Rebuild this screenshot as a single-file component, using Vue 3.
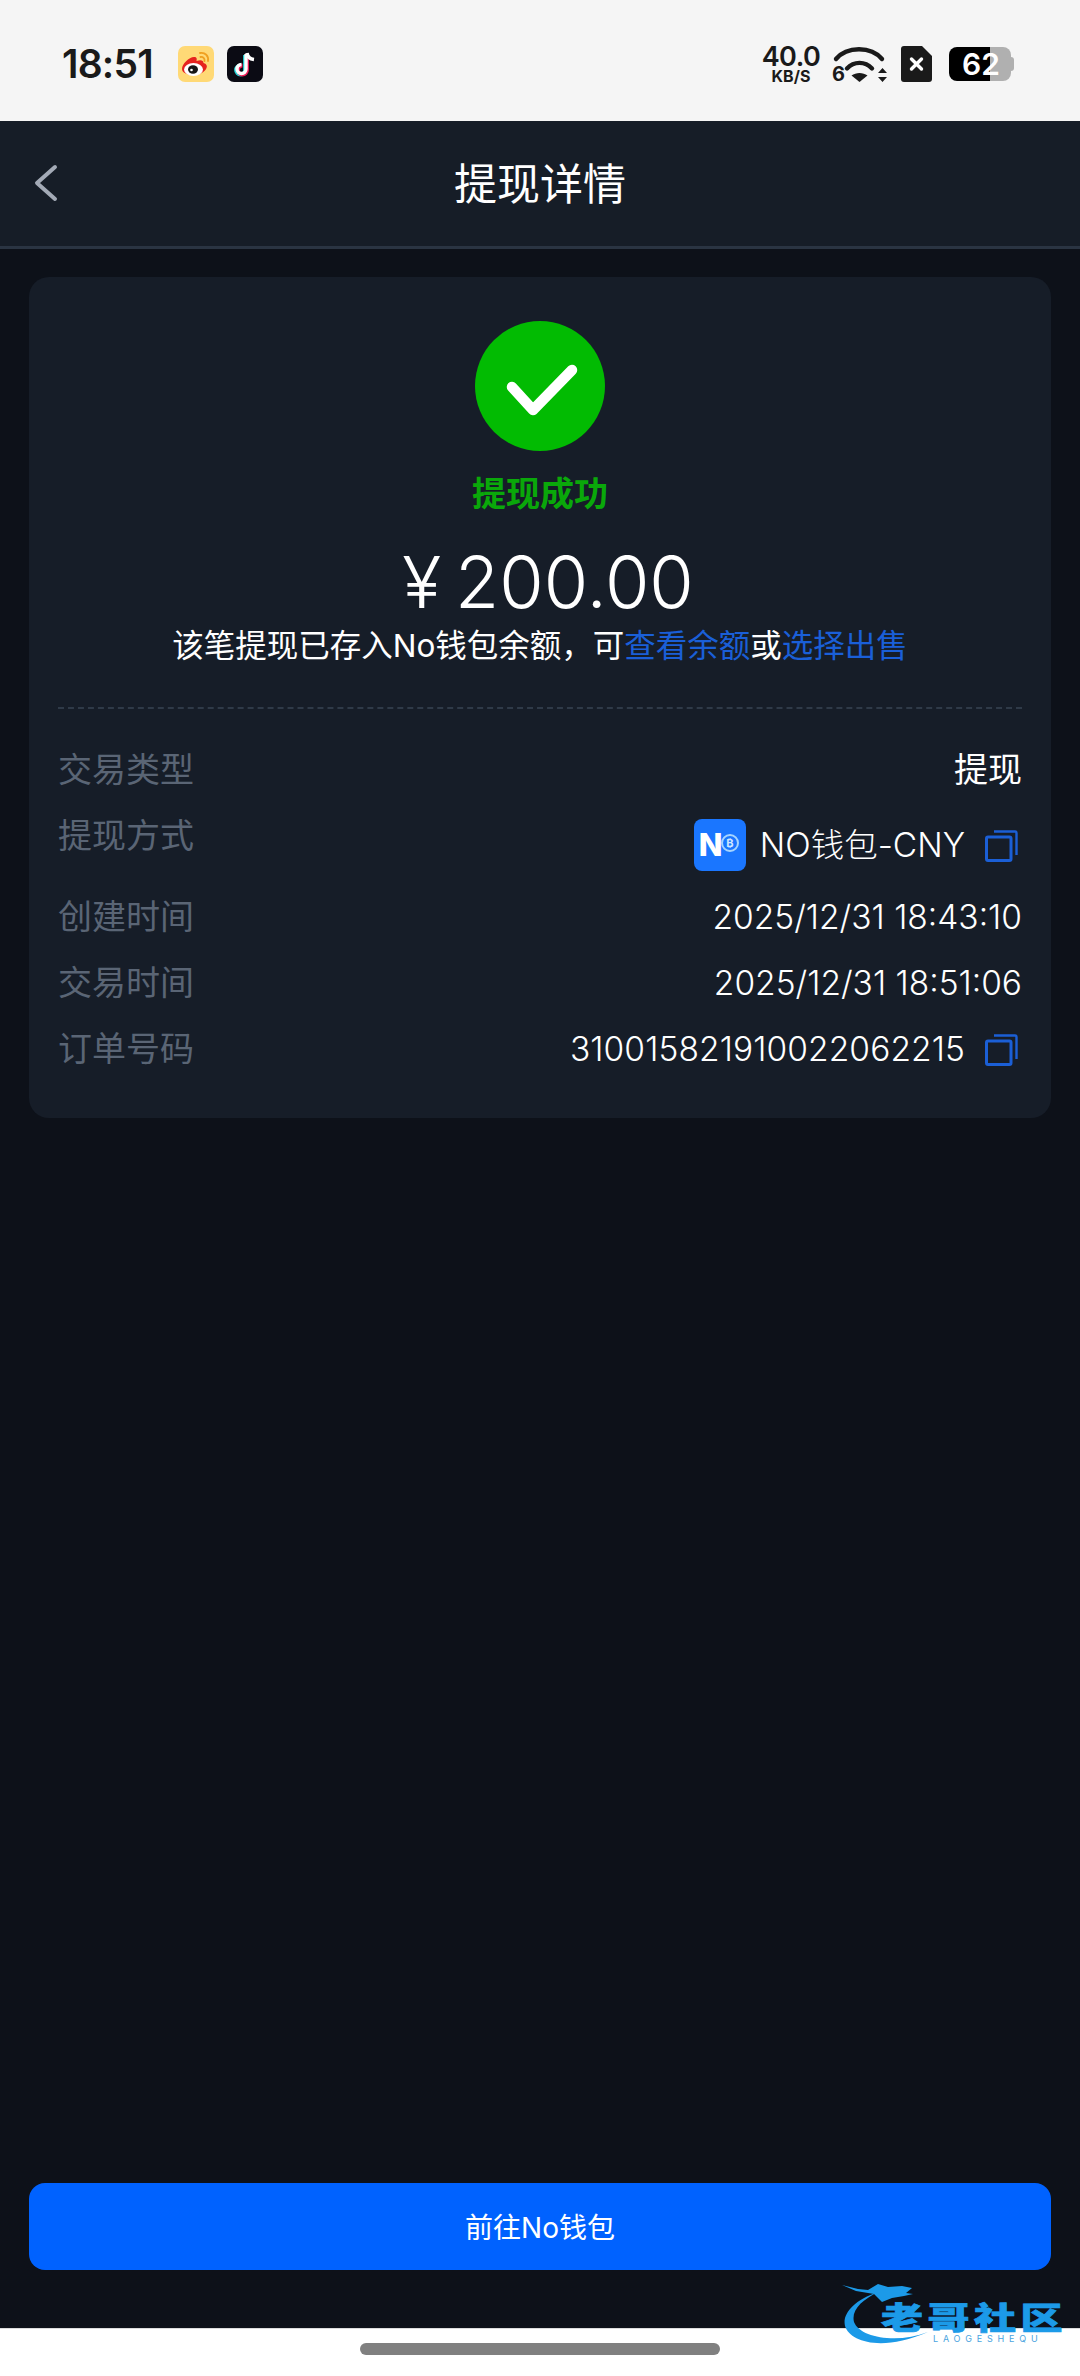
<script setup>
const rows = [
  { label: '创建时间', value: '2025/12/31 18:43:10' },
  { label: '交易时间', value: '2025/12/31 18:51:06' },
]
</script>

<template>
  <div class="screen">
    <div class="status">
      <span class="time">18:51</span>
      <svg class="app-icon weibo" viewBox="0 0 36 36">
        <rect width="36" height="36" rx="7" fill="#ffd976" />
        <path d="M4 23c0-5 7-12 12-12 3 0 3 2 2.500 4 4-1.500 7-1 7 2 3 .6 4 3 3 5-1.500 4-7 7-13 7-6.500 0-11.500-2.500-11.500-6z" fill="#e6231e" />
        <ellipse cx="15.500" cy="23.500" rx="9.500" ry="6.500" fill="#fff" />
        <ellipse cx="15" cy="23.500" rx="5" ry="4.200" fill="#161616" />
        <circle cx="13.500" cy="24" r="1.300" fill="#fff" />
        <path d="M22 7c5-1 9 3 8 8M22.500 11c2.500-.5 4.500 1.500 4 4" fill="none" stroke="#f0a020" stroke-width="1.800" stroke-linecap="round" />
      </svg>
      <svg class="app-icon tiktok" viewBox="0 0 36 36">
        <rect width="36" height="36" rx="7" fill="#0b0b14" />
        <path d="M19 8v15a4.500 4.500 0 1 1-4.500-4.500" fill="none" stroke="#25d8dc" stroke-width="3.800" transform="translate(-1 1)" />
        <path d="M19 8v15a4.500 4.500 0 1 1-4.500-4.500" fill="none" stroke="#f0205a" stroke-width="3.800" transform="translate(1 1)" />
        <path d="M19 8v15a4.500 4.500 0 1 1-4.500-4.500" fill="none" stroke="#fff" stroke-width="3.400" />
        <path d="M20 7c.5 3.500 3 6 7 6.500" fill="none" stroke="#fff" stroke-width="3.600" />
      </svg>
      <div class="status-right">
        <div class="speed">
          <span class="speed-num">40.0</span>
          <span class="speed-unit">KB/S</span>
        </div>
        <div class="wifi">
          <svg viewBox="0 0 55 36" class="wifi-svg">
            <path d="M4 13C15 0 39 0 50 13" fill="none" stroke="#1a1a1a" stroke-width="4.400" stroke-linecap="round" />
            <path d="M15 22.500C22 15 33 15 40 22.500" fill="none" stroke="#1a1a1a" stroke-width="4.400" stroke-linecap="round" />
            <path d="M27.500 36l-8-6.500c4.500-3.500 11.500-3.500 16 0z" fill="#1a1a1a" />
            <path d="M50.500 22l4.500 5h-9zM50.500 36l4.500-5h-9z" fill="#1a1a1a" />
          </svg>
          <span class="wifi-six">6</span>
        </div>
        <svg class="sim" viewBox="0 0 31 36">
          <path d="M3 0h18l10 10v23a3 3 0 0 1-3 3H3a3 3 0 0 1-3-3V3a3 3 0 0 1 3-3z" fill="#1a1a1a" />
          <path d="M10.500 13l10 10M20.500 13l-10 10" stroke="#fff" stroke-width="3.400" stroke-linecap="round" />
        </svg>
        <div class="battery">
          <div class="battery-fill"></div>
          <div class="battery-rest"></div>
          <div class="battery-nub"></div>
          <span class="battery-text">62</span>
        </div>
      </div>
    </div>

    <div class="nav">
      <svg class="back" viewBox="0 0 24 38">
        <path d="M21 3L3 19l18 16" fill="none" stroke="#a3aab6" stroke-width="4" stroke-linecap="round" stroke-linejoin="round" />
      </svg>
      <span class="nav-title">提现详情</span>
    </div>

    <main class="body">
      <section class="card">
        <div class="hero">
          <svg class="ok" viewBox="0 0 130 130">
            <circle cx="65" cy="65" r="65" fill="#02bb02" />
            <path d="M37 66l21 23 39-40" fill="none" stroke="#fff" stroke-width="10.500" stroke-linecap="round" stroke-linejoin="round" />
          </svg>
          <div class="ok-title">提现成功</div>
          <div class="amount"><span class="yen">¥</span><span>200.00</span></div>
          <div class="note">该笔提现已存入No钱包余额&#xFF0C;可<span class="link">查看余额</span>或<span class="link">选择出售</span></div>
        </div>

        <div class="details">
          <div class="row">
            <span class="label">交易类型</span>
            <span class="value value-cn">提现</span>
          </div>
          <div class="row row-method">
            <span class="label">提现方式</span>
            <span class="value method">
              <span class="no-logo">
                <span class="no-n">N</span>
                <span class="no-coin">₿</span>
              </span>
              <span>NO钱包-CNY</span>
              <svg class="copy" viewBox="0 0 33 33">
                <rect x="1.500" y="8" width="24.500" height="23.500" rx="1.500" fill="none" stroke="#1b5fd6" stroke-width="3" />
                <path d="M9 2.500h21a1.500 1.500 0 0 1 1.500 1.500v22" fill="none" stroke="#1b5fd6" stroke-width="2.400" />
              </svg>
            </span>
          </div>
          <div v-for="r in rows" :key="r.label" class="row">
            <span class="label">{{ r.label }}</span>
            <span class="value">{{ r.value }}</span>
          </div>
          <div class="row">
            <span class="label">订单号码</span>
            <span class="value method">
              <span class="order-no">310015821910022062215</span>
              <svg class="copy" viewBox="0 0 33 33">
                <rect x="1.500" y="8" width="24.500" height="23.500" rx="1.500" fill="none" stroke="#1b5fd6" stroke-width="3" />
                <path d="M9 2.500h21a1.500 1.500 0 0 1 1.500 1.500v22" fill="none" stroke="#1b5fd6" stroke-width="2.400" />
              </svg>
            </span>
          </div>
        </div>
      </section>

      <button class="cta">前往No钱包</button>
    </main>

    <footer class="home">
      <div class="home-bar"></div>
    </footer>

    <div class="mark">
      <svg class="mark-dragon" viewBox="0 0 225 70">
        <path d="M36 12C12 20 0 34 3 46c5 16 37 26 83 6-30 12-68 6-74-10-3-12 8-22 24-30z" fill="#1c9ae8" />
        <path d="M0 5l16 4 10 1 10-6 10 3 14-1 10 2-6 5 7 1-9 2-12 2-10 4-8-8-18-3z" fill="#1c9ae8" />
      </svg>
      <span class="mark-cn">老哥社区</span>
      <span class="mark-en">LAOGESHEQU</span>
    </div>
  </div>
</template>

<style>
html, body { margin: 0; padding: 0; background: #0d1119; }
</style>

<style scoped>
.screen {
  position: relative;
  width: 1080px;
  height: 2376px;
  display: flex;
  flex-direction: column;
  overflow: hidden;
  font-family: Inter, "Noto Sans CJK SC", sans-serif;
  color: #fff;
  background: #0d1119;
}
.status {
  height: 121px;
  flex: none;
  box-sizing: border-box;
  background: #f5f5f5;
  color: #1a1a1a;
  display: flex;
  align-items: center;
  padding: 6px 65px 0 62px;
}
.time {
  font-size: 39px;
  font-weight: 600;
  width: 116px;
  letter-spacing: -0.8px;
}
.app-icon { width: 36px; height: 36px; display: block; }
.weibo { margin-right: 10px; }
.tiktok { margin-left: 3px; }
.status-right {
  margin-left: auto;
  display: flex;
  align-items: center;
}
.speed {
  display: flex;
  flex-direction: column;
  align-items: center;
  width: 58px;
  margin-right: 12px;
}
.speed-num { font-size: 27px; font-weight: 600; line-height: 24px; letter-spacing: -0.5px; }
.speed-unit { font-size: 16px; font-weight: 700; line-height: 14px; }
.wifi { position: relative; width: 55px; height: 36px; margin-right: 14px; }
.wifi-svg { width: 55px; height: 36px; display: block; }
.wifi-six { position: absolute; left: 0; bottom: -2px; font-size: 20px; font-weight: 700; line-height: 20px; }
.sim { width: 31px; height: 36px; margin-right: 17px; display: block; }
.battery { position: relative; width: 66px; height: 34px; display: flex; }
.battery-fill { width: 41px; background: #000; border-radius: 8px 0 0 8px; }
.battery-rest { width: 21px; background: #b0b0b0; border-radius: 0 8px 8px 0; }
.battery-nub { width: 3px; height: 14px; margin-top: 10px; background: #b0b0b0; border-radius: 0 3px 3px 0; }
.battery-text {
  position: absolute;
  left: 13px;
  top: 0;
  font-size: 30px;
  font-weight: 600;
  line-height: 34px;
  color: #fff;
}
.nav {
  position: relative;
  flex: none;
  height: 128px;
  box-sizing: border-box;
  background: #161d27;
  border-bottom: 3px solid #2a3442;
  display: flex;
  align-items: center;
  justify-content: center;
}
.back { position: absolute; left: 34px; top: 43px; width: 24px; height: 38px; }
.nav-title { font-size: 43px; line-height: 58px; font-weight: 400; }
.body {
  flex: 1;
  display: flex;
  flex-direction: column;
  justify-content: space-between;
  padding: 28px 29px 58px 29px;
}
.card {
  background: #161d28;
  border-radius: 20px;
  padding: 44px 29px 47px;
  height: 841px;
  box-sizing: border-box;
}
.hero {
  display: flex;
  flex-direction: column;
  align-items: center;
  padding-bottom: 43px;
  border-bottom: 2px dashed #2f3a48;
}
.ok { width: 130px; height: 130px; display: block; }
.ok-title {
  margin-top: 22px;
  font-size: 34px;
  line-height: 42px;
  font-weight: 700;
  color: #0aa80a;
}
.amount {
  margin-top: 23px;
  padding-left: 16px;
  font-size: 72px;
  line-height: 88px;
  font-weight: 350;
  white-space: nowrap;
}
.yen { margin-right: 14px; }
.note {
  font-size: 31.500px;
  line-height: 36px;
  margin-top: 2px;
  white-space: nowrap;
  font-weight: 400;
}
.link { color: #1a5fd8; }
.details {
  display: flex;
  flex-direction: column;
  gap: 22px;
  padding-top: 39px;
}
.row {
  display: flex;
  justify-content: space-between;
  align-items: flex-start;
  font-size: 33.500px;
  line-height: 44px;
}
.row-method { padding-bottom: 2px; }
.label { color: #5a6575; font-weight: 400; font-size: 34px; }
.value { font-weight: 300; white-space: nowrap; }
.value-cn { font-size: 34px; font-weight: 400; }
.order-no { letter-spacing: 0.100px; }
.method {
  display: flex;
  align-items: center;
  gap: 14px;
}
.copy { width: 33px; height: 33px; margin-left: 6px; margin-right: 4px; display: block; }
.row-method .method { margin-top: 5px; }
.no-logo {
  position: relative;
  width: 52px;
  height: 52px;
  border-radius: 8px;
  background: #1a76ff;
  display: block;
}
.no-n {
  position: absolute;
  left: 5px;
  top: 4px;
  font-size: 31px;
  line-height: 44px;
  font-weight: 800;
  color: #fff;
}
.no-coin {
  position: absolute;
  left: 27px;
  top: 15px;
  width: 18px;
  height: 18px;
  box-sizing: border-box;
  border: 2.500px solid #a5d4ff;
  border-radius: 50%;
  font-size: 11px;
  line-height: 14px;
  font-weight: 700;
  text-align: center;
  color: #cfe6ff;
}
.cta {
  height: 87px;
  border: 0;
  border-radius: 16px;
  background: #0062ff;
  color: #fff;
  font-family: inherit;
  font-size: 28px;
  font-weight: 400;
  padding: 0 0 2px;
}
.home {
  flex: none;
  height: 48px;
  background: #fff;
  border-top: 1px solid #dcdcdc;
  display: flex;
  justify-content: center;
  padding-top: 14px;
  box-sizing: border-box;
}
.home-bar {
  width: 360px;
  height: 12px;
  border-radius: 6px;
  background: #808080;
}
.mark {
  position: absolute;
  left: 842px;
  top: 2280px;
  width: 225px;
  height: 70px;
}
.mark-dragon { position: absolute; left: 0; top: 0; width: 225px; height: 70px; }
.mark-cn {
  position: absolute;
  left: 39px;
  top: 23px;
  height: 30px;
  font-size: 42px;
  line-height: 30px;
  font-weight: 900;
  letter-spacing: 4.500px;
  white-space: nowrap;
  color: #1c9ae8;
  transform: scaleY(0.72);
  -webkit-text-stroke: 1px #1c9ae8;
}
.mark-en {
  position: absolute;
  left: 91px;
  top: 54px;
  font-size: 9px;
  line-height: 10px;
  letter-spacing: 4.800px;
  color: #4aa4e0;
  white-space: nowrap;
}
</style>
